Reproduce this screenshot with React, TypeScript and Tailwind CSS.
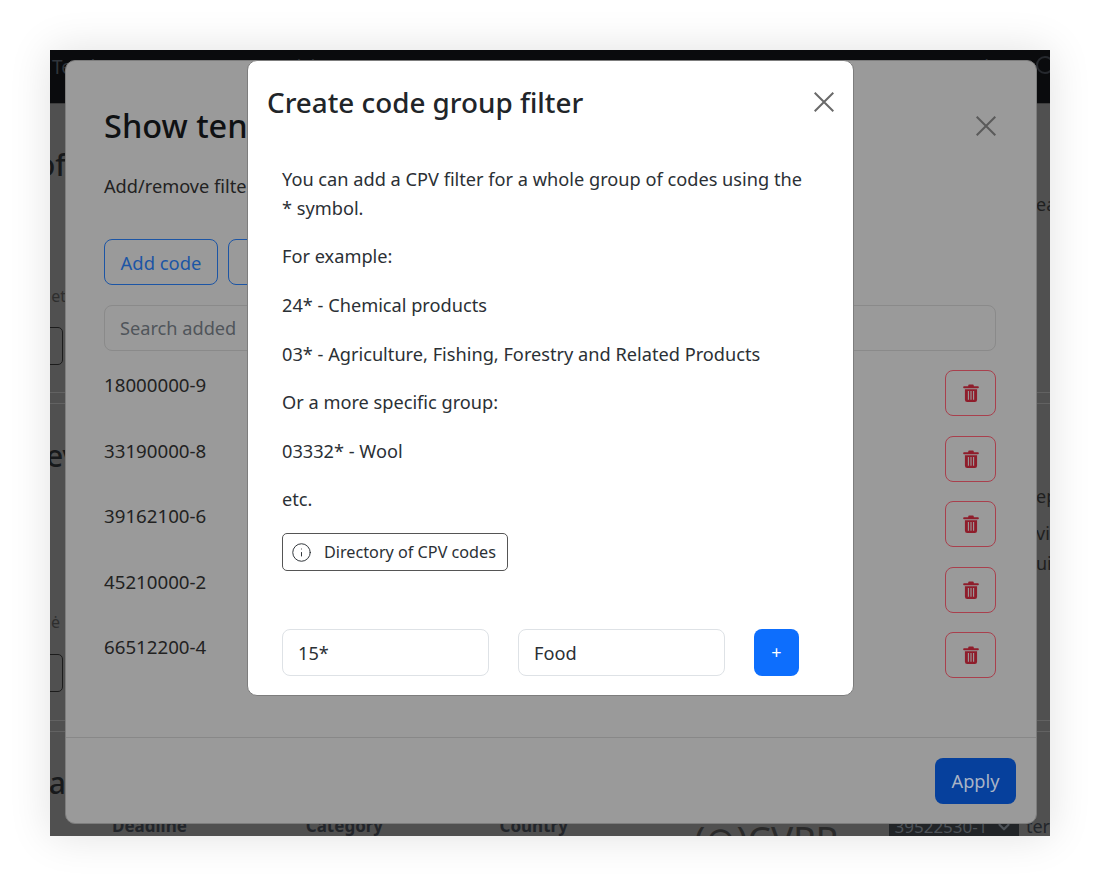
import { ChevronDown, Info } from "lucide-react";
import type { ReactElement } from "react";

const codes = ["18000000-9", "33190000-8", "39162100-6", "45210000-2", "66512200-4"];

const examples = [
  "For example:",
  "24* - Chemical products",
  "03* - Agriculture, Fishing, Forestry and Related Products",
  "Or a more specific group:",
  "03332* - Wool",
  "etc.",
];

function TrashIcon(): ReactElement {
  return (
    <svg viewBox="0 0 16 16" className="w-[18px] h-[18px]" fill="#8f1d2b" aria-hidden="true">
      <path d="M5.5 1.5A1 1 0 0 1 6.5.5h3a1 1 0 0 1 1 1V2h3.6a.9.9 0 0 1 0 1.8H1.9a.9.9 0 0 1 0-1.8h3.6v-.5zM2.6 4.6h10.8v9.4a2 2 0 0 1-2 2H4.6a2 2 0 0 1-2-2V4.6zm2.6 1.7v7.6h1V6.3h-1zm2.3 0v7.6h1V6.3h-1zm2.3 0v7.6h1V6.3h-1z" />
    </svg>
  );
}

function CloseIcon({ color }: { readonly color: string }): ReactElement {
  return (
    <svg viewBox="0 0 20 20" className="w-[20px] h-[20px] shrink-0" fill="none" stroke={color} strokeWidth={2} aria-hidden="true">
      <path d="M.7.7l18.6 18.6M19.3.7L.7 19.3" />
    </svg>
  );
}

function Divider(): ReactElement {
  return <div className="h-[12px] border-y border-[#626262]" />;
}

// what shows of the page behind the two dialogs, dimmed by the backdrop
function PageBehind(): ReactElement {
  return (
    <div className="flex flex-col w-[1000px] h-[786px] bg-[#505050] text-[#17191b] overflow-hidden">
      <div className="h-[54px] bg-[#0a0b0d] border-b border-[#3c3c3c] flex justify-between pl-[2px] pr-[2px] pt-[4px] text-[19px] leading-[26px] text-[#30353b] overflow-hidden">
        <div className="flex gap-[50px]">
          <span>Tenders</span>
          <span>Home</span>
          <span>Pricing</span>
          <span>Contact</span>
        </div>
        <div className="flex gap-[40px] mr-[-6px]">
          <span>Search</span>
          <span className="w-[18px] h-[18px] mt-[2px] rounded-full border-2 border-[#26292e]" />
        </div>
      </div>

      <div className="flex justify-between h-[288px]">
        <div className="w-[16px] flex flex-col items-end overflow-hidden">
          <span className="mt-[41px] text-[30px] leading-[40px] font-medium">of</span>
          <span className="mt-[99px] text-[16px] leading-[24px] text-[#2e2e2e]">et</span>
          <span className="mt-[19px] mr-[3px] w-[40px] h-[38px] shrink-0 rounded-[5px] border border-[#1c1c1c] flex items-center justify-end pr-[26px] text-[17px] text-[#2a2a2a]">e</span>
        </div>
        <span className="w-[14px] overflow-hidden mt-[86px] text-[18px] leading-[28px] text-[#1f1f1f]">ea</span>
      </div>
      <Divider />

      <div className="flex justify-between h-[317px]">
        <div className="w-[16px] flex flex-col overflow-hidden">
          <span className="mt-[32px] ml-[-4px] text-[30px] leading-[40px] font-medium">ev</span>
          <span className="mt-[134px] self-end text-[16px] leading-[24px] text-[#2e2e2e] pr-[6px]">ė</span>
          <span className="mt-[20px] self-end mr-[3px] w-[40px] h-[38px] shrink-0 rounded-[5px] border border-[#1c1c1c] flex items-center justify-end pr-[26px] text-[17px] text-[#2a2a2a]">e</span>
        </div>
        <div className="w-[14px] flex flex-col overflow-hidden mt-[77px] text-[18px] leading-[30px] text-[#1f1f1f]">
          <span>ep</span>
          <span className="mt-[7px]">vic</span>
          <span>uip</span>
        </div>
      </div>
      <Divider />

      <div className="h-[82px]">
        <span className="block w-[16px] flex justify-end overflow-hidden mt-[31px] text-[30px] leading-[40px] font-medium">a</span>
      </div>
      <div className="flex items-start pl-[62px] h-[22px] text-[#22252a]">
        <span className="w-[194px] text-[17px] leading-[24px] font-bold">Deadline</span>
        <span className="w-[194px] text-[17px] leading-[24px] font-bold">Category</span>
        <span className="w-[195px] text-[17px] leading-[24px] font-bold">Country</span>
        <span className="w-[195px] text-[37px] leading-[40px] text-[#2a2a2a] mt-[5px]">(⊙)CVPP</span>
        <span className="w-[130px] h-[30px] bg-[#212427] flex justify-center gap-[8px] text-[#4e5359] text-[17px] leading-[26px]">
          39522530-1
          <ChevronDown className="w-[18px] h-[18px] mt-[4px]" strokeWidth={3} />
        </span>
        <span className="ml-[7px] text-[18px] leading-[24px]">ter</span>
      </div>
    </div>
  );
}

export default function App(): ReactElement {
  return (
    <div
      className="w-[1100px] h-[886px] bg-white p-[50px] overflow-hidden"
      style={{ fontFamily: '"Noto Sans", "Open Sans", sans-serif' }}
    >
      <div className="relative w-[1000px] h-[786px] shadow-[0_0_40px_rgba(0,0,0,0.12)]">
        <PageBehind />

        {/* underlying dialog, dimmed */}
        <div className="absolute left-[15px] top-[10px] w-[972px] h-[764px] bg-[#9a9a9a] rounded-[10px] border border-[#7d7d7d] flex flex-col text-[#222]">
          <div className="flex-1 pl-[38px] pr-[40px]">
            <div className="flex justify-between items-center pt-[42px]">
              <span className="text-[32.5px] leading-[46px] text-[#0f1113] font-medium">Show tenders</span>
              <CloseIcon color="#5a5a5a" />
            </div>
            <p className="mt-[23px] text-[18.2px] leading-[28px]">Add/remove filters</p>
            <div className="mt-[39px] flex gap-[10px]">
              <button className="h-[46px] w-[114px] pt-[2px] rounded-[8px] border border-[#1c55a5] text-[#1c55a5] text-[18.4px]">Add code</button>
              <button className="h-[46px] w-[114px] pt-[2px] rounded-[8px] border border-[#1c55a5] text-[#1c55a5] text-[18.4px]">Add</button>
            </div>
            <div className="mt-[20px] h-[46px] pt-[1px] rounded-[8px] border border-[#8a8a8a] px-[15px] flex items-center text-[18.2px] text-[#50555a]">
              Search added
            </div>
            <div className="mt-[19px] flex flex-col gap-[19.5px]">
              {codes.map((code) => (
                <div key={code} className="flex justify-between h-[46px]">
                  <span className="text-[18.7px] leading-[30px]">{code}</span>
                  <span className="w-[51px] h-[46px] rounded-[8px] border border-[#a9404d] flex items-center justify-center">
                    <TrashIcon />
                  </span>
                </div>
              ))}
            </div>
          </div>
          <div className="h-[86px] border-t border-[#888] flex items-start justify-end pr-[20px] pt-[20px]">
            <button className="w-[81px] h-[46px] pt-[1px] rounded-[8px] bg-[#06409c] text-[#a9b4c6] text-[18.2px]">Apply</button>
          </div>
        </div>

        {/* active dialog */}
        <div className="absolute left-[197px] top-[10px] w-[607px] h-[636px] bg-white rounded-[10px] border border-[#7d7d7d] text-[#2b3035]">
          <div className="flex justify-between items-center pl-[19px] pr-[19px] pt-[21px]">
            <span className="text-[27.8px] leading-[40px] font-medium text-[#212529]">Create code group filter</span>
            <CloseIcon color="#6a6a6a" />
          </div>
          <div className="pl-[34px] pr-[40px] mt-[43px] text-[18.2px] leading-[28.8px]">
            <p>You can add a CPV filter for a whole group of codes using the * symbol.</p>
            {examples.map((line) => (
              <p key={line} className="mt-[19.8px]">{line}</p>
            ))}
            <button className="mt-[19px] h-[38px] w-[226px] rounded-[5px] border border-[#555] flex items-center gap-[12px] px-[8px] text-[16.2px] whitespace-nowrap">
              <Info className="w-[21px] h-[21px] shrink-0" strokeWidth={1.1} />
              Directory of CPV codes
            </button>
            <div className="mt-[58px] flex items-center gap-[29px]">
              <div className="w-[207px] h-[47px] pt-[1px] rounded-[8px] border border-[#dee2e6] px-[15px] flex items-center">15*</div>
              <div className="w-[207px] h-[47px] pt-[1px] rounded-[8px] border border-[#dee2e6] px-[15px] flex items-center">Food</div>
              <button className="w-[45px] h-[47px] rounded-[8px] bg-[#0d6efd] text-white text-[18px]">+</button>
            </div>
          </div>
        </div>
      </div>
    </div>
  );
}
